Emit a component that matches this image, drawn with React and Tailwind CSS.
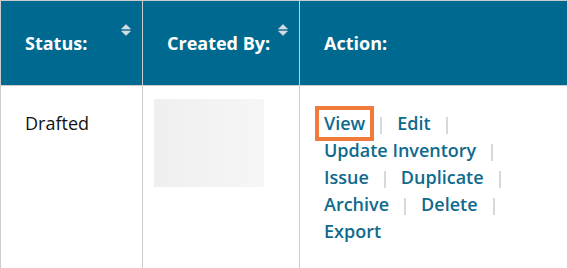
import React from "react";

function SortIcon() {
  return (
    <svg className="absolute top-[23px] right-[11px]" width="10" height="12" viewBox="0 0 10 12">
      <path d="M5 0.5 L9.5 5 L0.5 5 Z" fill="#d9dde2" stroke="#d9dde2" strokeWidth="0.6" strokeLinejoin="round" />
      <path d="M0.5 7 L9.5 7 L5 11.5 Z" fill="#d9dde2" stroke="#d9dde2" strokeWidth="0.6" strokeLinejoin="round" />
    </svg>
  );
}

function Sep() {
  return <span className="inline-block w-[2px] h-[17px] bg-[#d5d9df] mx-[15px] align-[-4px]" />;
}

function L({ children }) {
  return <a className="text-[#0f6a8d] font-semibold cursor-pointer">{children}</a>;
}

export default function App() {
  return (
    <div className="w-[567px] h-[268px] overflow-hidden bg-white" style={{ fontFamily: '"Open Sans", sans-serif' }}>
      <div className="w-[640px] border-l border-t border-[#cccccc]">
        <div className="grid grid-cols-[142px_157px_1fr] bg-[#00698f] text-white text-[18px] font-bold">
          <div className="relative h-[85px] border-r border-b border-[#cccccc] flex items-center pl-[24px]">
            Status:
            <SortIcon />
          </div>
          <div className="relative h-[85px] border-r border-b border-[#cccccc] flex items-center pl-[24px]">
            Created By:
            <SortIcon />
          </div>
          <div className="h-[85px] border-b border-[#cccccc] flex items-center pl-[24px]">Action:</div>
        </div>
        <div className="grid grid-cols-[142px_157px_1fr] h-[220px] text-[18px] leading-[27px]">
          <div className="border-r border-[#cccccc] pl-[24px] pt-[24px] text-[#111]">Drafted</div>
          <div className="border-r border-[#cccccc] pl-[11px] pt-[13px]">
            <div className="w-[110px] h-[88px] bg-gradient-to-r from-[#efefef] to-[#f6f6f6]" />
          </div>
          <div className="pl-[24px] pt-[24px]">
            <div>
              <span className="relative">
                <L>View</L>
                <span className="absolute left-[-9px] right-[-9px] top-[-5px] bottom-[-6px] border-[4px] border-[#f07b3a]" />
              </span>
              <Sep />
              <L>Edit</L>
              <Sep />
            </div>
            <div>
              <L>Update Inventory</L>
              <Sep />
            </div>
            <div>
              <L>Issue</L>
              <Sep />
              <L>Duplicate</L>
              <Sep />
            </div>
            <div>
              <L>Archive</L>
              <Sep />
              <L>Delete</L>
              <Sep />
            </div>
            <div>
              <L>Export</L>
            </div>
          </div>
        </div>
      </div>
    </div>
  );
}
